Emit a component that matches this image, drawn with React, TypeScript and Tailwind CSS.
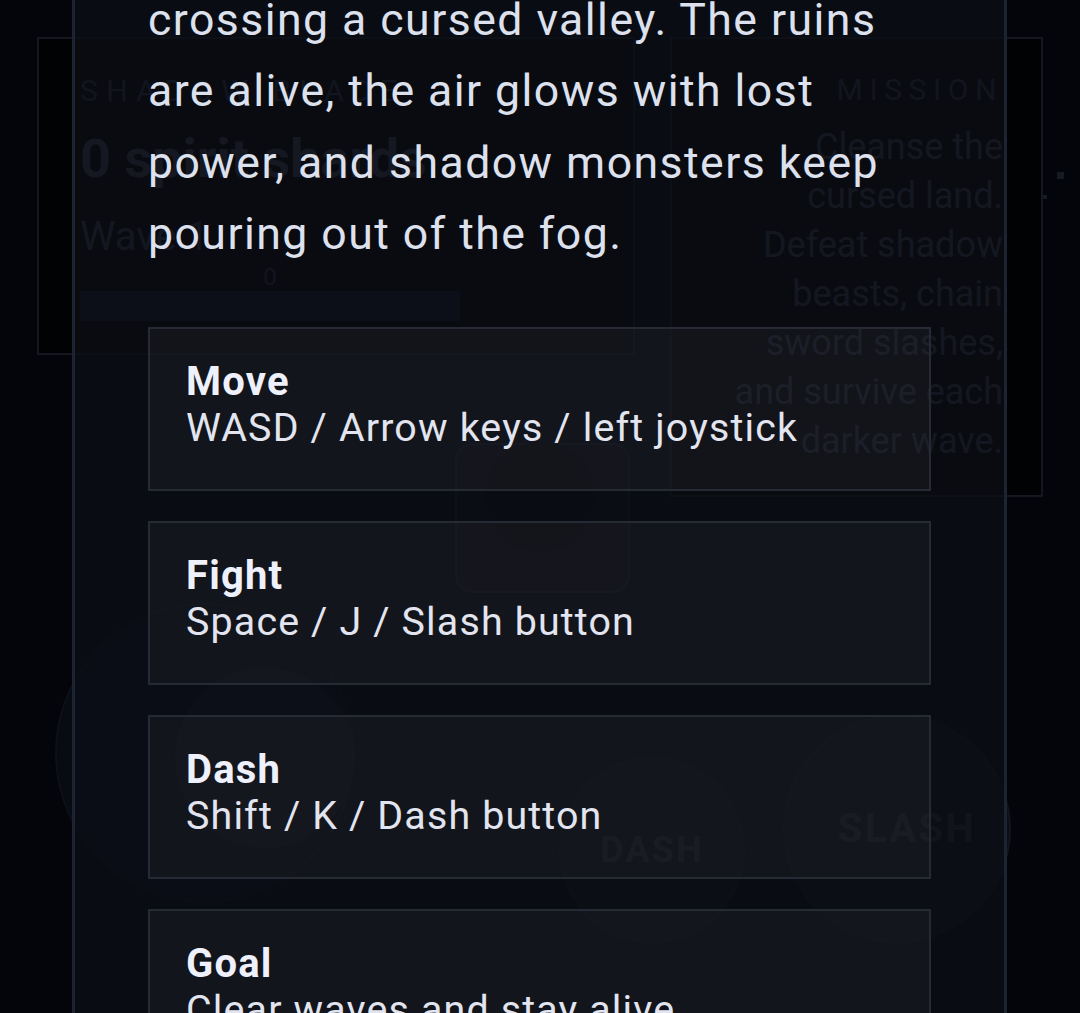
import React from 'react';

const controls = [
  { title: 'Move', text: 'WASD / Arrow keys / left joystick' },
  { title: 'Fight', text: 'Space / J / Slash button' },
  { title: 'Dash', text: 'Shift / K / Dash button' },
  { title: 'Goal', text: 'Clear waves and stay alive.' },
];

// the game behind the sheet, dimmed
const GameLayer: React.FC = () => (
  <div className="absolute inset-0 flex flex-col px-[37px] pt-[37px]">
    <div className="flex items-start justify-between">
      <div className="flex h-[318px] w-[598px] flex-col border-2 border-[#14171f] bg-[#010204] px-[41px] pt-[34px]">
        <div className="text-[30px] leading-[36px] tracking-[0.28em] text-[#2a2f3b]">SHADOW BLADE</div>
        <div className="mt-[18px] text-[54px] font-bold leading-[64px] text-[#363c4a]">0 spirit shards</div>
        <div className="mt-[22px] text-[40px] leading-[48px] text-[#323845]">Wave 1</div>
        <div className="mt-[2px] flex w-[380px] flex-col items-center">
          <span className="text-[24px] leading-[28px] text-[#2a2f3b]">0</span>
          <div className="h-[30px] w-full bg-[#1c2130]/60" />
        </div>
      </div>

      <div className="flex h-[460px] w-[373px] flex-col items-end border-2 border-[#14171f] bg-[#010204] pr-[38px] pt-[33px] text-right">
        <div className="text-[30px] leading-[36px] tracking-[0.22em] text-[#2a2f3b]">MISSION</div>
        <p className="mt-[15px] w-[270px] text-[36px] leading-[49px] text-[#343a47]">
          Cleanse the cursed land. Defeat shadow beasts, chain sword slashes, and survive each darker wave.
        </p>
      </div>
    </div>

    <div className="absolute left-[1057px] top-[172px] h-[7px] w-[7px] bg-[#161a22]" />
    <div className="absolute left-[1043px] top-[195px] h-[4px] w-[4px] bg-[#161a22]" />

    {/* hero */}
    <div className="absolute left-[455px] top-[443px] h-[150px] w-[175px] rounded-[18px] border-2 border-[#232837]/60 bg-[#1b2030]/30" />
    <div className="absolute left-[485px] top-[442px] h-[110px] w-[110px] rounded-full bg-[#05070c]" />

    {/* joystick */}
    <div className="absolute left-[55px] top-[603px] h-[300px] w-[300px] rounded-full border-2 border-[#0e1017] bg-[#1e2331]/20" />
    <div className="absolute left-[175px] top-[668px] h-[180px] w-[180px] rounded-full bg-[#262c3c]/25" />

    {/* action buttons */}
    <div className="absolute left-[559px] top-[757px] flex h-[186px] w-[186px] items-center justify-center rounded-full border-2 border-[#10131a] bg-[#1e2331]/30">
      <span className="text-[36px] font-bold tracking-[0.06em] text-[#262b39]">DASH</span>
    </div>
    <div className="absolute left-[783px] top-[715px] flex h-[228px] w-[228px] items-center justify-center rounded-full border-2 border-[#12151c] bg-[#1e2331]/30">
      <span className="ml-[20px] text-[40px] font-bold tracking-[0.06em] text-[#262b39]">SLASH</span>
    </div>
  </div>
);

export default function App() {
  return (
    <div className="relative h-[1013px] w-[1080px] overflow-hidden bg-[#03050b] font-['Roboto','Liberation_Sans',sans-serif]">
      <GameLayer />

      {/* how-to-play sheet, scrolled part way */}
      <div className="absolute bottom-[-200px] left-[72px] top-[-60px] w-[935px] border-x-[3px] border-[#1c2331] bg-[#0b0e16]/[0.78] px-[73px] pt-[45px]">
        <p className="text-[44.6px] leading-[71.4px] tracking-[1.45px] text-[#dde1ee]">
          crossing a cursed valley. The ruins are alive, the air glows with lost power, and shadow monsters keep pouring out of the fog.
        </p>

        <div className="mt-[56px] flex flex-col gap-[30px]">
          {controls.map(c => (
            <div key={c.title} className="border-2 border-[#252a35] bg-white/[0.035] px-[36px] py-[36px]">
              <div className="text-[40px] font-bold leading-[34px] tracking-[1.2px] text-[#eef0fb]">{c.title}</div>
              <div className="mt-[4px] text-[39.4px] leading-[50px] tracking-[1.15px] text-[#e2e5f0]">{c.text}</div>
            </div>
          ))}
        </div>
      </div>
    </div>
  );
}
